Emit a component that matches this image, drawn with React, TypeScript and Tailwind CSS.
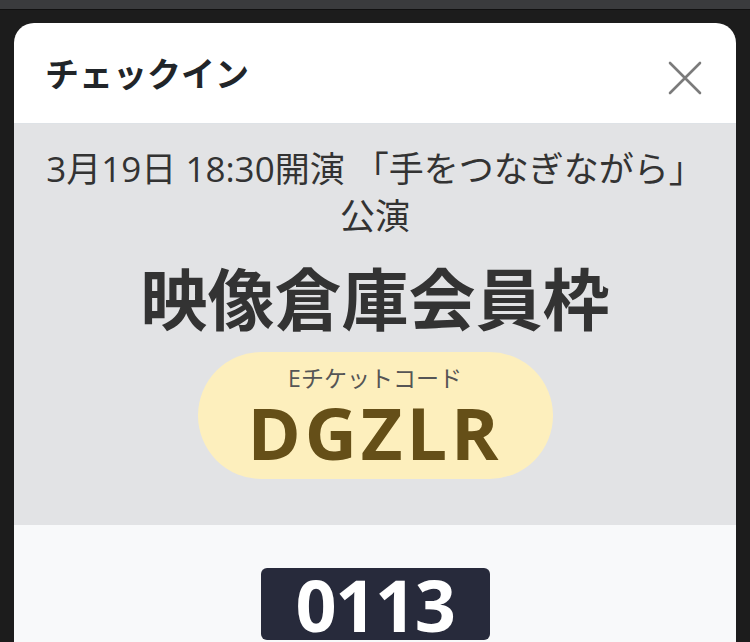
import React from 'react';

const latin = "font-['Open_Sans','Noto_Sans_CJK_JP',sans-serif]";

const CheckInModal = () => {
  return (
    <div className="bg-white rounded-t-[20px] overflow-hidden">
      <div className="h-[101px] flex items-center justify-between pl-[31px] pr-[34px] border-b border-[#dee2e6]">
        <h1 className="text-[34px] font-bold text-[#212529] font-['Noto_Sans_CJK_JP',sans-serif] leading-none">
          チェックイン
        </h1>
        <button className="w-[34px] h-[34px] mt-[10px] flex items-center justify-center">
          <svg width="34" height="34" viewBox="0 0 34 34">
            <path d="M2 2 L32 32 M32 2 L2 32" stroke="#7b7b7b" strokeWidth="2.6" strokeLinecap="round" />
          </svg>
        </button>
      </div>

      <div className="bg-[#e2e3e5] pt-[21px] pb-[46px] flex flex-col items-center text-[#333]">
        <p className={`${latin} text-[35px] leading-[47px] text-center`}>
          3月19日 18:30開演 「手をつなぎながら」
          <br />
          公演
        </p>
        <h2 className="mt-[16px] text-[67px] font-bold leading-[82px] font-['Noto_Sans_CJK_JP',sans-serif] text-[#333]">
          映像倉庫会員枠
        </h2>
        <div className="mt-[15px] w-[355px] h-[127px] rounded-full bg-[#fdefbd] flex flex-col items-center pt-[11px]">
          <span className={`${latin} text-[23px] leading-[31px] text-[#555]`}>Eチケットコード</span>
          <span className={`${latin} text-[72px] font-bold leading-[76px] tracking-[0.055em] text-[#654f18]`}>
            DGZLR
          </span>
        </div>
      </div>

      <div className="bg-[#f8f9fa] pt-[43px] pb-[40px] flex justify-center">
        <div className="w-[229px] h-[72px] rounded-[6px] bg-[#272a3b] flex items-center justify-center">
          <span className={`${latin} text-[72px] font-bold leading-none text-white tracking-[-0.02em]`}>0113</span>
        </div>
      </div>
    </div>
  );
};

export default function App() {
  return (
    <div className="h-[642px] overflow-hidden bg-[#1c1c1c] flex flex-col">
      <div className="h-[10px] shrink-0 bg-[#3a3b3d] border-b border-[#111]" />
      <div className="shrink-0 px-[14px] pt-[13px]">
        <CheckInModal />
      </div>
    </div>
  );
}
